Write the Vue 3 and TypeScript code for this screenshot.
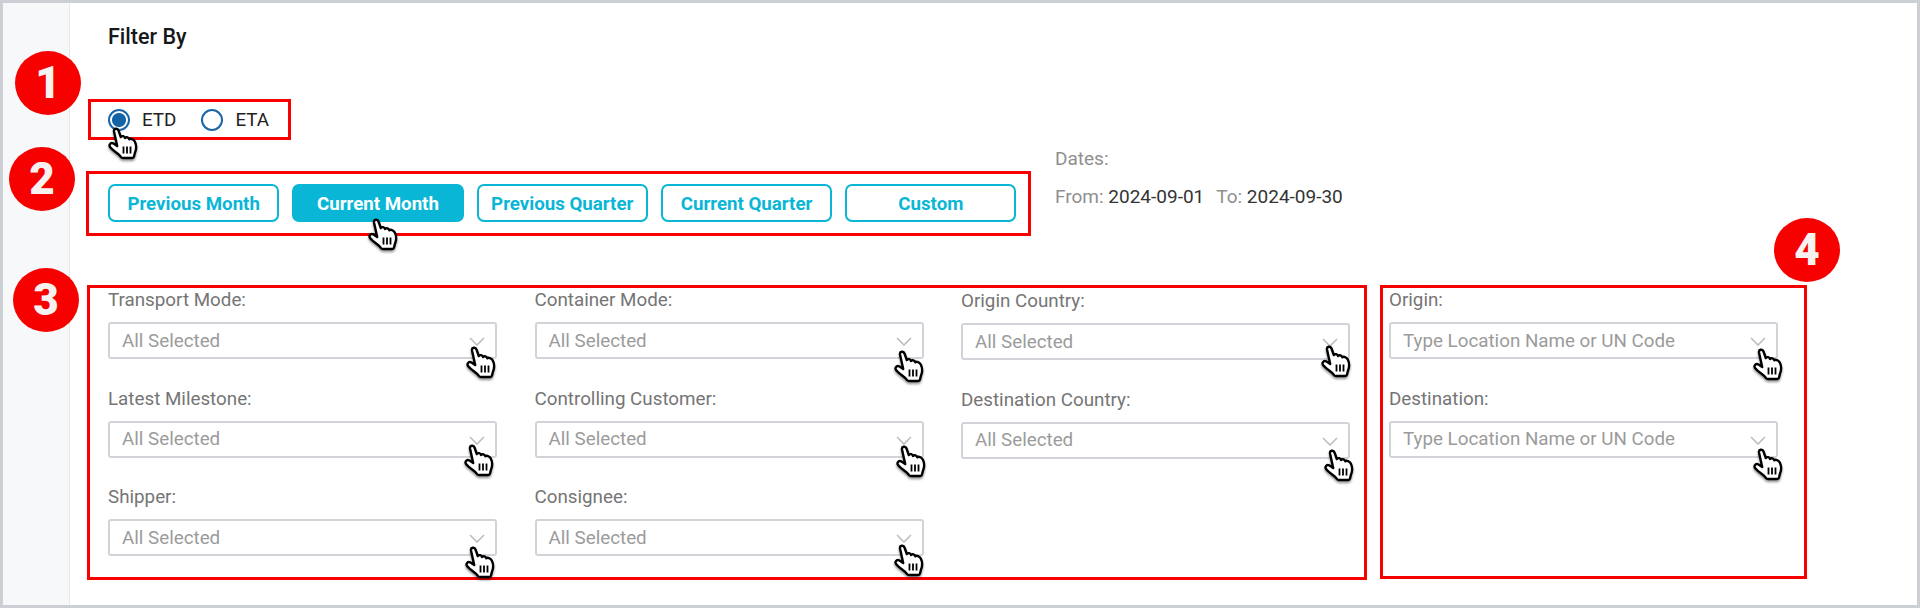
<script setup lang="ts">
interface Field {
  label: string
  placeholder: string
  handX: number
  handY: number
}

const allSelected = 'All Selected'
const typeLocation = 'Type Location Name or UN Code'

const periods = ['Previous Month', 'Current Month', 'Previous Quarter', 'Current Quarter', 'Custom']

const columns: Field[][] = [
  [
    { label: 'Transport Mode:', placeholder: allSelected, handX: 29, handY: 11 },
    { label: 'Latest Milestone:', placeholder: allSelected, handX: 31, handY: 12 },
    { label: 'Shipper:', placeholder: allSelected, handX: 30, handY: 8 },
  ],
  [
    { label: 'Container Mode:', placeholder: allSelected, handX: 28, handY: 7 },
    { label: 'Controlling Customer:', placeholder: allSelected, handX: 26, handY: 11 },
    { label: 'Consignee:', placeholder: allSelected, handX: 28, handY: 10 },
  ],
  [
    { label: 'Origin Country:', placeholder: allSelected, handX: 27, handY: 13 },
    { label: 'Destination Country:', placeholder: allSelected, handX: 24, handY: 8 },
  ],
]

const locations: Field[] = [
  { label: 'Origin:', placeholder: typeLocation, handX: 23, handY: 9 },
  { label: 'Destination:', placeholder: typeLocation, handX: 23, handY: 8 },
]

const handOffset = (f: Field) => ({ right: `${f.handX - 30}px`, bottom: `${f.handY - 33}px` })
</script>

<template>
  <div class="frame">
    <svg width="0" height="0" class="defs">
      <symbol id="hand" viewBox="0 0 30 33">
        <path
          d="M6 4.5C5.5 1.5 9.5 .5 10.5 3.5L12.8 10C14 8.5 16.5 9 17 11C18.2 9.5 20.8 10.2 21.3 12.3C22.6 11.2 25.5 12 26.8 14.5C28.5 18 28.5 22 27 25.5L26 29.5C25.8 30.6 25 31 24 31L15 31C13.8 31 13 30.5 12.5 29.5C10.5 26.5 5.5 24.5 2 20C.5 17.5 3 15 5.5 16.5L9.2 19Z"
          fill="#fff"
          stroke="#000"
          stroke-width="2.4"
          stroke-linejoin="round"
        />
        <path d="M15.5 19.5V26.5M19 19.5V26.5M22.5 19.5V26.5" stroke="#000" stroke-width="1.8" fill="none" />
      </symbol>
    </svg>

    <aside class="sidebar"></aside>

    <main class="main">
      <h2 class="title">Filter By</h2>

      <div class="callout-box date-type">
        <span class="badge badge-1">1</span>
        <label class="radio">
          <span class="radio-dot checked"></span>
          ETD
          <svg class="hand hand-radio"><use href="#hand" /></svg>
        </label>
        <label class="radio">
          <span class="radio-dot"></span>
          ETA
        </label>
      </div>

      <div class="period-row">
        <div class="callout-box periods">
          <span class="badge badge-2">2</span>
          <button
            v-for="p in periods"
            :key="p"
            type="button"
            class="period-btn"
            :class="{ active: p === 'Current Month' }"
          >
            {{ p }}
            <svg v-if="p === 'Current Month'" class="hand hand-btn"><use href="#hand" /></svg>
          </button>
        </div>
        <div class="dates">
          <div class="dates-title">Dates:</div>
          <div class="dates-range">
            From: <b>2024-09-01</b><span class="to">To:</span> <b>2024-09-30</b>
          </div>
        </div>
      </div>

      <div class="filters-row">
        <div class="callout-box filters">
          <span class="badge badge-3">3</span>
          <div v-for="(col, i) in columns" :key="i" class="column" :class="{ shifted: i === 2 }">
            <div v-for="f in col" :key="f.label" class="field">
              <div class="field-label">{{ f.label }}</div>
              <div class="select">
                <span>{{ f.placeholder }}</span>
                <svg class="chevron" width="16" height="9" viewBox="0 0 16 9">
                  <path d="M1 1L8 8L15 1" fill="none" stroke="#bdbdbd" stroke-width="1.6" />
                </svg>
                <svg class="hand" :style="handOffset(f)"><use href="#hand" /></svg>
              </div>
            </div>
          </div>
        </div>

        <div class="callout-box locations">
          <span class="badge badge-4">4</span>
          <div class="column">
            <div v-for="f in locations" :key="f.label" class="field">
              <div class="field-label">{{ f.label }}</div>
              <div class="select">
                <span>{{ f.placeholder }}</span>
                <svg class="chevron" width="16" height="9" viewBox="0 0 16 9">
                  <path d="M1 1L8 8L15 1" fill="none" stroke="#bdbdbd" stroke-width="1.6" />
                </svg>
                <svg class="hand" :style="handOffset(f)"><use href="#hand" /></svg>
              </div>
            </div>
          </div>
        </div>
      </div>
    </main>
  </div>
</template>

<style>
html,
body {
  margin: 0;
  background: #fff;
}
</style>

<style scoped>
.frame {
  display: flex;
  box-sizing: border-box;
  width: 1920px;
  height: 608px;
  border: 3px solid #ccd0d4;
  font-family: Roboto, 'Liberation Sans', sans-serif;
  overflow: hidden;
}

.defs {
  position: absolute;
}

.sidebar {
  flex: 0 0 66px;
  background: #f7f8fa;
  border-right: 1px solid #e6e8eb;
}

.main {
  flex: 1;
  padding-left: 16px;
}

.title {
  margin: 21px 0 0 22px;
  font-size: 21.5px;
  line-height: 26px;
  font-weight: 500;
  color: #16181a;
}

.callout-box {
  position: relative;
  box-sizing: border-box;
  border: 3px solid #f70000;
}

.badge {
  position: absolute;
  display: flex;
  align-items: center;
  justify-content: center;
  width: 66px;
  height: 64px;
  border-radius: 50%;
  background: #f70000;
  color: #f7f2f2;
  font-size: 44px;
  font-weight: 900;
}

.badge-1 {
  left: -76px;
  top: -51px;
}

.badge-2 {
  left: -80px;
  top: -27px;
}

.badge-3 {
  left: -77px;
  top: -20px;
}

.badge-4 {
  right: -36px;
  top: -70px;
}

.date-type {
  display: flex;
  align-items: center;
  gap: 25px;
  width: 203px;
  height: 41px;
  margin: 49px 0 0 2px;
  padding-left: 17px;
}

.radio {
  position: relative;
  display: flex;
  align-items: center;
  gap: 12px;
  font-size: 18.8px;
  color: #222;
}

.radio-dot {
  box-sizing: border-box;
  width: 22px;
  height: 22px;
  border: 2px solid #1a66a8;
  border-radius: 50%;
}

.radio-dot.checked {
  background: radial-gradient(circle, #1464a5 0 6.5px, #fff 7.5px);
}

.period-row {
  display: flex;
  align-items: flex-start;
  margin-top: 31px;
}

.periods {
  display: flex;
  gap: 13px;
  width: 945px;
  height: 65px;
  padding: 10px 0 0 19px;
}

.period-btn {
  position: relative;
  width: 171.3px;
  height: 38px;
  padding: 1px 0 0;
  border: 2px solid #09b6d6;
  border-radius: 7px;
  background: #fff;
  color: #09b6d6;
  font-family: inherit;
  font-size: 18.7px;
  font-weight: 700;
}

.period-btn.active {
  background: #09b6d6;
  color: #fff;
}

.dates {
  margin: -24px 0 0 24px;
  font-size: 19px;
  color: #8f8f8f;
}

.dates-title {
  line-height: 24px;
}

.dates-range {
  margin-top: 14px;
  line-height: 24px;
}

.dates-range b {
  font-weight: 400;
  color: #333;
}

.to {
  margin-left: 12px;
}

.filters-row {
  display: flex;
  gap: 14px;
  margin-top: 49px;
}

.filters {
  display: flex;
  gap: 37.5px;
  width: 1280px;
  height: 295px;
  margin-left: 1px;
  padding-left: 18px;
}

.locations {
  width: 427px;
  height: 294px;
  padding-left: 6px;
  margin-left: -1px;
}

.column {
  display: flex;
  flex-direction: column;
  gap: 27.5px;
}

.column.shifted {
  margin-top: 1px;
}

.field {
  width: 389px;
}

.field-label {
  font-size: 18.8px;
  line-height: 24px;
  color: #757575;
}

.select {
  position: relative;
  box-sizing: border-box;
  display: flex;
  align-items: center;
  height: 37px;
  margin-top: 10px;
  padding-left: 12px;
  border: 2px solid #d2d3d8;
  border-radius: 3px;
  font-size: 18.8px;
  color: #9b9b9b;
}

.chevron {
  position: absolute;
  right: 10px;
  top: 13px;
}

.hand {
  position: absolute;
  width: 30px;
  height: 33px;
  filter: drop-shadow(0 2px 1px rgba(0, 0, 0, 0.4));
}

.hand-radio {
  left: 0;
  top: 18px;
}

.hand-btn {
  left: 74px;
  top: 32px;
}
</style>
